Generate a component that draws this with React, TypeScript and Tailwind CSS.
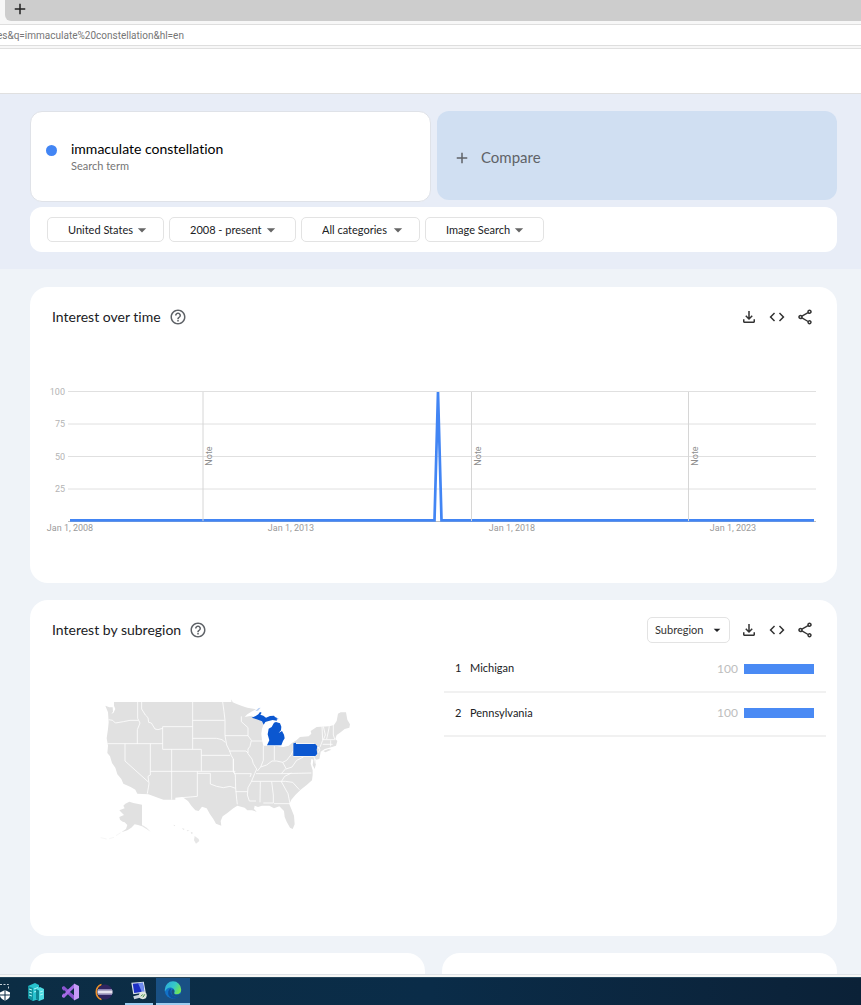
import React from "react";
import {
  MdAdd,
  MdArrowDropDown,
  MdCode,
  MdHelpOutline,
  MdOutlineFileDownload,
  MdOutlineShare,
} from "react-icons/md";

const filters = [
  { label: "Location", value: "United States", width: "w-[117px]", arrow: "right-[11px]" },
  { label: "Time range", value: "2008 - present", width: "w-[127px]", arrow: "right-[14px]" },
  { label: "Category", value: "All categories", width: "w-[119px]", arrow: "right-[11px]" },
  { label: "Search type", value: "Image Search", width: "w-[119px]", arrow: "right-[14px]" },
];

const regions = [
  { rank: 1, name: "Michigan", value: 100 },
  { rank: 2, name: "Pennsylvania", value: 100 },
];

const gridLines = [
  { y: 11.5, label: "100" },
  { y: 44, label: "75" },
  { y: 76.5, label: "50" },
  { y: 109, label: "25" },
];

const dates = [
  { x: 40, label: "Jan 1, 2008" },
  { x: 261, label: "Jan 1, 2013" },
  { x: 482, label: "Jan 1, 2018" },
  { x: 703, label: "Jan 1, 2023" },
];

const notes = [173, 441.5, 658.5];

// one path per run of state borders
const borders = [
  "M56 104L68 106L76 114L100 110L120 106H145",
  "M143 51V100L150 114L142 134V176",
  "M155 51V72L166 90L174 98L176 112L184 114L195 132L204 134L218 130",
  "M308 51V193",
  "M218 125H308",
  "M218 125V193",
  "M52 176H218",
  "M105 176V228L174 290",
  "M181 176V270L174 274L177 296L172 326",
  "M218 193H334",
  "M245 193V344",
  "M181 259H436",
  "M308 106H404",
  "M308 160H380L396 164L406 172",
  "M334 193V259",
  "M334 211H420",
  "M322 259V334L277 338",
  "M322 265H361V297L380 304L400 308L420 304L437 310",
  "M398 51L402 80L405 106V152L410 180L418 196L424 212L430 222V259L436 270L437 310L440 342L442 358",
  "M405 152H474",
  "M418 198H468L474 204",
  "M430 222V259L434 266H484L480 276",
  "M454 94V110L474 128L474 152L484 166L480 184L474 192V206L486 222L490 236L500 252L494 266L484 290L474 308L472 330L478 348H498",
  "M484 168H518",
  "M437 320H472",
  "M520 182V226L512 246L502 258",
  "M553 182V226",
  "M512 246L530 240L546 228L560 228L578 232L590 226L604 208L610 196V176",
  "M498 266H574L664 264",
  "M484 289H586L608 292L628 314",
  "M578 232L588 250L574 266",
  "M588 252L606 246L620 226L640 216",
  "M610 214H672L676 236",
  "M574 290L584 274L604 264",
  "M511 290L510 352",
  "M545 290L550 330V354H520",
  "M574 290L594 326L600 356H552",
  "M610 176H672L682 186L690 194L682 206L676 214",
  "M676 182L690 190",
  "M690 186L698 166L696 124",
  "M700 124L706 150L700 164",
  "M718 124L714 144L710 162",
  "M730 120V150L734 162",
  "M698 164H736",
  "M698 178H728",
  "M722 166V184",
];

const Dropdown = ({
  label,
  value,
  box,
  field,
  arrow,
}: {
  label: string;
  value: string;
  box: string;
  field: string;
  arrow: string;
}) => (
  <div className={`relative rounded-[5px] border border-[#e3e3e3] bg-white ${box}`}>
    <select
      aria-label={label}
      className={`block h-full w-full appearance-none bg-transparent outline-none ${field}`}
    >
      <option>{value}</option>
    </select>
    <MdArrowDropDown className={`pointer-events-none absolute top-0 bottom-0 my-auto ${arrow}`} />
  </div>
);

const CardHeader = ({ title, children }: { title: string; children?: React.ReactNode }) => (
  <div className="flex h-12 items-center pt-3 pr-[23px] pl-[22px]">
    <h2 className="pb-[2px] text-[14px] text-[#202124]">{title}</h2>
    <button type="button" aria-label={`Help for ${title}`} className="ml-2">
      <MdHelpOutline className="size-[18px] text-[#5f6368]" />
    </button>
    <div className="ml-auto flex items-center gap-[10px] text-[#333]">
      {children}
      <button type="button" aria-label="Download">
        <MdOutlineFileDownload className="size-[18px]" />
      </button>
      <button type="button" aria-label="Embed">
        <MdCode className="size-[18px]" />
      </button>
      <button type="button" aria-label="Share">
        <MdOutlineShare className="size-[18px]" />
      </button>
    </div>
  </div>
);

const TimeChart = () => (
  <svg
    viewBox="0 0 807 160"
    className="mt-[45px] w-full font-[Roboto,sans-serif]"
    role="img"
    aria-label="Interest over time"
  >
    {gridLines.map(line => (
      <g key={line.label}>
        <path d={`M38 ${line.y}H786`} stroke="#e0e0e0" />
        <text x="35" y={line.y + 3} textAnchor="end" fontSize="9" fill="#b4b4b4">
          {line.label}
        </text>
      </g>
    ))}
    <path d="M38 141.5H786" stroke="#bdbdbd" />
    <path d="M40 140.3H404.5L408 12L411.5 140.3H784" fill="none" stroke="#4285f4" strokeWidth="2.7" />
    {notes.map(x => (
      <g key={x}>
        <path d={`M${x} 12V141`} stroke="#d6d6d6" />
        <text
          transform={`translate(${x + 9} 76) rotate(-90)`}
          textAnchor="middle"
          fontSize="9"
          fill="#8e8e8e"
        >
          Note
        </text>
      </g>
    ))}
    {dates.map(date => (
      <text key={date.label} x={date.x} y="151" textAnchor="middle" fontSize="9" fill="#9a9a9a">
        {date.label}
      </text>
    ))}
  </svg>
);

const UsMap = () => (
  <svg viewBox="0 0 810 495" className="w-[270px]" role="img" aria-label="Map of the United States">
    <g fill="#e1e1e1">
      <path d="M46 62L58 67L68 67L69 80L64 86L70 84L76 72L72 62V51H424V43L428 52L440 57L458 64L472 68L498 73L484 80L472 88L464 96L476 94L486 92L492 98L512 106L520 114V120L516 132L514 146L516 166L520 182H555L580 186L596 182L606 174L620 165L630 156L656 154L664 146L662 138L680 126L718 124L732 120L740 108L744 86L752 82L768 82L772 104L780 118L778 128L764 132L752 142L740 150L736 162L742 168L738 182L726 186L704 192L690 202L694 190L690 212L688 222L678 224L674 218L678 236L674 252L668 240L670 224L664 222L662 236L668 256L668 270L666 286L650 300L632 314L616 330L604 344L598 358L604 372L612 392L614 418L608 432L600 428L590 410L584 396L582 378L568 364L552 370L538 362H516L504 366L494 362L492 372L500 380L486 376L472 376L464 368L442 362L430 370L412 384L398 394L392 408L394 422L378 416L370 402L360 388L350 370L336 365L326 378L316 376L304 362L294 348L277 336L256 338V344H220L175 328L142 326L136 314L122 306L100 296L94 282L82 268L76 248L66 234L60 214L52 204L54 182L50 160L54 132L56 112L54 82Z" />
      <path d="M700 198L716 192L724 194L706 202Z" />
      <path d="M156 359L130 354L118 350L106 356L100 362L104 370L88 376L96 384L102 390L88 396L90 404L98 410L104 412L112 420L108 432L94 442L112 436L124 428L134 418L144 420L156 424Z" />
    </g>
    <g fill="#e6e6e6">
      <path d="M157 420L170 428L182 440L168 431L156 424Z" />
      <path d="M250 419L256 421L253 424ZM276 429L284 432L280 435ZM290 435L299 437L292 439ZM302 440L310 444L304 447ZM314 453L326 462L328 468L318 476L312 466Z" />
    </g>
    <path
      d="M92 443L78 452M72 457L58 461M50 462L32 458"
      stroke="#f1f1f1"
      strokeWidth="2"
      fill="none"
    />
    <g fill="none" stroke="#fff" strokeWidth="2.4">
      {borders.map(d => (
        <path key={d} d={d} />
      ))}
    </g>
    <g fill="#0b57d0">
      <path d="M485 98L497 93L505 88L510 81L515 83L511 89L520 92L528 98L540 93L552 92L555 96L563 100L560 107L548 105L536 108L526 111L521 119L516 109L500 103Z" />
      <path d="M531 181L538 166L533 148L536 131L545 126L552 113L558 111L570 115L574 125L573 136L566 144L576 138L582 149L584 160L579 168L574 181Z" />
      <path d="M610 175L618 173L618 177H676L682 184L680 194L682 206L676 213H610Z" />
    </g>
    <path d="M504 77L512 68L506 69L496 78ZM558 102L566 100L564 104Z" fill="#b9cff2" />
  </svg>
);

const Taskbar = () => (
  <footer className="flex h-7 shrink-0 items-center border-t border-[#24455b] bg-linear-to-r from-[#0c2d44] via-[#0a2c48] to-[#0b2137]">
    <button type="button" aria-label="Security" className="w-[19px]">
      <svg viewBox="0 0 19 28" className="h-7 w-[19px]">
        <path d="M0 6.5H8.5V12" stroke="#c7d2da" fill="none" strokeDasharray="2 1.5" />
        <path d="M0 14.5L5 12L10 14.5V18Q9 21 5 22.5Q1 21 0 18Z" fill="#fff" />
        <path d="M5 12V22M0 17H10" stroke="#0c2d44" />
      </svg>
    </button>
    <button type="button" aria-label="Servers" className="w-[34px]">
      <svg viewBox="0 0 34 28" className="h-7 w-[34px]">
        <path d="M9 8L16 5L20 7V21L14 23L9 20Z" fill="#28c3cf" />
        <path d="M9 8L14 10V23L9 20Z" fill="#12939f" />
        <path d="M17 11L21 9L25 11V21L20 23L17 21Z" fill="#4edbe3" />
        <path d="M17 11L20 12.5V23L17 21Z" fill="#0f8793" />
        <path d="M10 11L13 12M10 14L13 15M10 17L13 18M15 11L19 9.5M15 14L17 13.5M21 14L24 13M21 17L24 16" stroke="#a9f5f7" />
      </svg>
    </button>
    <button type="button" aria-label="Visual Studio" className="w-[34px]">
      <svg viewBox="0 0 34 28" className="h-7 w-[34px]">
        <path d="M9 9L11 8L22 18V21L21 22L9 11Z" fill="#8a55cf" />
        <path d="M9 9V19L11 20L21 10V6L9 17Z" fill="#a46be6" />
        <path d="M21 5.5L26 8V20L21 22.5Z" fill="#c79bf7" />
        <path d="M11 12V16L13 14Z" fill="#0c2d44" />
        <path d="M21 11V17L17 14Z" fill="#0c2d44" />
      </svg>
    </button>
    <button type="button" aria-label="Eclipse" className="w-[38px]">
      <svg viewBox="0 0 38 28" className="h-7 w-[38px]">
        <path d="M14.5 6.5A8 8 0 0 0 14.5 21.5" fill="none" stroke="#f0902a" strokeWidth="1.6" />
        <circle cx="18" cy="14" r="7.5" fill="#2f2560" />
        <path d="M11 11.5H25M11 16.5H25" stroke="#8d86b5" />
        <path d="M10.5 14H25.5" stroke="#e6e3f0" strokeWidth="3.4" />
      </svg>
    </button>
    <button type="button" aria-label="Remote session" className="h-full w-7 border-b-2 border-[#9ccdf0]">
      <svg viewBox="0 0 28 26" className="h-[25px] w-7">
        <path d="M6 5L19 4L21 15L8 17Z" fill="#d9e2ee" />
        <path d="M7.5 6L18 5L19.5 14L9 15.5Z" fill="#1c2fc4" />
        <path d="M13 5.5L18 5L19.5 14L17 14.5Z" fill="#6f8cf0" />
        <path d="M8 19L16 17L17 20L9 22Z" fill="#c9d3dd" />
        <circle cx="18" cy="18" r="4" fill="#dfe6df" />
        <path d="M16 19L18 17M18 20L20 17" stroke="#3c8a3c" />
      </svg>
    </button>
    <button type="button" aria-label="Edge" className="ml-[3px] h-full w-[34px] border-b-2 border-[#9ccdf0] bg-[#195084]">
      <svg viewBox="0 0 34 26" className="h-[25px] w-[34px]">
        <defs>
          <linearGradient id="edgeTop" x1="0" y1="0" x2="1" y2="0.5">
            <stop offset="0" stopColor="#2aa6e0" />
            <stop offset="0.6" stopColor="#36c9c6" />
            <stop offset="1" stopColor="#6ee35a" />
          </linearGradient>
        </defs>
        <circle cx="17" cy="13" r="8.5" fill="#1272c8" />
        <path d="M8.5 12A8.5 8.5 0 0 1 25.5 12Q25.5 17 20.5 17Q17.5 17 18.5 14.5Q19 11 15 10Q11 9.5 8.5 14Z" fill="url(#edgeTop)" />
        <path d="M15 11Q13 17 18 19Q21 20 24.5 17.5Q22 21.5 17.5 21.5Q11 20 12 14Q13 11 15 11Z" fill="#0e4f9c" />
        <path d="M18.5 14Q17 17 20.5 17.5Q23 17.5 25 16L24 18.5Q21 20 18 19Q14.5 17 15.5 13Q16 11.5 17.5 12Q18.5 12.5 18.5 14Z" fill="#195084" />
      </svg>
    </button>
  </footer>
);

const App = () => {
  return (
    <div className="flex h-screen flex-col overflow-hidden bg-[#eff3f8] font-[Lato,sans-serif] text-[#202124] [font-variant-ligatures:none]">
      <header className="shrink-0 bg-[#f7f7f7]">
        <div className="ml-[5px] h-[21px] rounded-bl-md bg-[#cdcdcd] pl-[6px]">
          <button type="button" aria-label="New tab" className="block">
            <MdAdd className="size-[18px] text-[#222]" />
          </button>
        </div>
        <div className="mt-[3px] h-[22px] border-y border-[#dedede] bg-white">
          <input
            aria-label="Address"
            defaultValue="es&q=immaculate%20constellation&hl=en"
            className="-ml-[3px] block h-5 w-full font-[Roboto,sans-serif] text-[10px] text-[#767676] outline-none"
          />
        </div>
        <div className="mt-[2px] h-[46px] border-y border-[#e0e0e0] bg-white" />
      </header>

      <main className="min-h-0 flex-1 overflow-hidden">
        <section className="bg-[#e8edf7] pt-[17px] pr-6 pb-[17px] pl-[30px]">
          <div className="grid grid-cols-[401fr_400fr] items-start gap-[6px]">
            <div className="flex h-[91px] items-center rounded-xl border border-[#dfe2e8] bg-white pl-[15px]">
              <span className="mb-3 size-[11px] rounded-full bg-[#4285f4]" />
              <div className="ml-[14px]">
                <p className="text-[14px] leading-[18px] text-black">immaculate constellation</p>
                <p className="text-[11px] leading-4 text-[#757575]">Search term</p>
              </div>
            </div>
            <button
              type="button"
              className="flex h-[89px] items-center rounded-xl bg-[#d0dff2] pt-1 pl-4 text-[15px] text-[#5f6368]"
            >
              <MdAdd className="mr-[10px] size-[18px]" />
              Compare
            </button>
          </div>
          <div className="mt-[5px] flex h-[45px] items-center gap-[5px] rounded-xl bg-white pl-[17px] text-[11px]">
            {filters.map(filter => (
              <Dropdown
                key={filter.label}
                label={filter.label}
                value={filter.value}
                box={`h-[25px] ${filter.width}`}
                field="pt-[2px] pl-5"
                arrow={`size-5 text-[#666] ${filter.arrow}`}
              />
            ))}
          </div>
        </section>

        <div className="flex flex-col gap-[17px] pt-[18px] pr-6 pl-[30px]">
          <section className="min-h-[296px] rounded-[18px] bg-white">
            <CardHeader title="Interest over time" />
            <TimeChart />
          </section>

          <section className="min-h-[336px] rounded-[18px] bg-white">
            <CardHeader title="Interest by subregion">
              <Dropdown
                label="Resolution"
                value="Subregion"
                box="h-[26px] w-[83px] text-[11px]"
                field="pl-[7px]"
                arrow="right-1 size-4 text-[#202124]"
              />
            </CardHeader>
            <div className="grid grid-cols-[414fr_393fr]">
              <div className="pt-[37px] pl-[60px]">
                <UsMap />
              </div>
              <div className="pr-[11px]">
                <table className="w-full text-[11px]">
                  <tbody>
                    {regions.map(region => (
                      <tr key={region.rank} className="h-11 border-b-2 border-[#f1f1f1]">
                        <td className="w-[26px] pb-[2px] pl-[11px]">{region.rank}</td>
                        <th scope="row" className="pb-[2px] text-left font-normal">
                          {region.name}
                        </th>
                        <td className="pr-[6px] pb-[2px] text-right text-[12px] text-[#bdbdbd]">{region.value}</td>
                        <td className="w-[82px] pb-[2px]">
                          <div className="w-[70px]">
                            <div className="h-[10px] bg-[#4a8af4]" style={{ width: `${region.value}%` }} />
                          </div>
                        </td>
                      </tr>
                    ))}
                  </tbody>
                </table>
              </div>
            </div>
          </section>

          <div className="grid grid-cols-2 gap-[17px]">
            <section className="h-40 rounded-[18px] bg-white" />
            <section className="h-40 rounded-[18px] bg-white" />
          </div>
        </div>
      </main>

      <div className="h-[3px] shrink-0 border-t border-[#dfe3e8] bg-[#f7f7f5]" />
      <Taskbar />
    </div>
  );
};

export default App;
